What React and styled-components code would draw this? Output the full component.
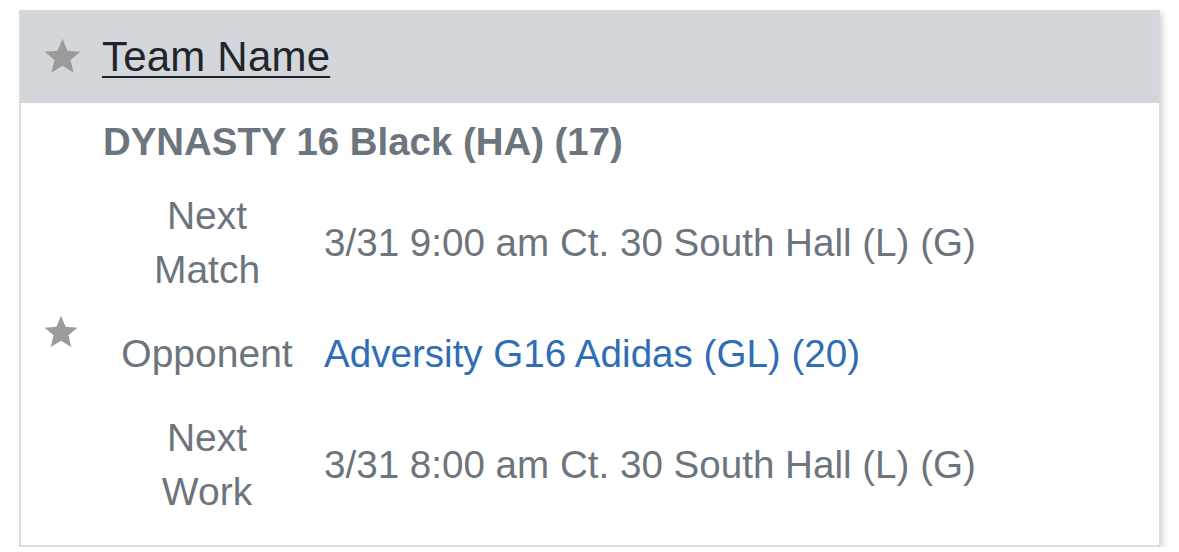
import React from 'react';
import styled, { createGlobalStyle } from 'styled-components';

const Global = createGlobalStyle`
  body {
    margin: 0;
    background: #ffffff;
    font-family: "Liberation Sans", Arial, sans-serif;
  }
`;

const Card = styled.div`
  margin: 10px 0 0 19px;
  width: 1141px;
  height: 537px;
  box-sizing: border-box;
  border: 1px solid #dadada;
  border-left: 2px solid #dcdcdc;
  border-bottom: 2px solid #dcdcdc;
  box-shadow: 3px 3px 6px rgba(0, 0, 0, 0.16);
  background: #fff;
  display: flex;
  flex-direction: column;
`;

const Header = styled.div`
  height: 91px;
  background: #d3d7db;
  border-bottom: 1px solid #cfd4d8;
  display: flex;
  align-items: center;
  gap: 20px;
  padding-left: 22px;
`;

const TeamLink = styled.a`
  font-size: 42px;
  color: #212529;
  text-decoration: underline;
  text-decoration-thickness: 2px;
  text-underline-offset: 5px;
  letter-spacing: 0.2px;
`;

const Body = styled.div`
  display: grid;
  grid-template-columns: 84px 204px 1fr;
  color: #6c757d;
`;

const Heading = styled.div`
  grid-column: 2 / 4;
  font-weight: bold;
  font-size: 38.4px;
  line-height: 54px;
  padding: 12px 0 5px 0;
  margin-left: -2px;
`;

const StarCell = styled.div`
  grid-column: 1;
  padding: 3px 0 0 22px;
  align-self: start;
`;

const Label = styled.div`
  grid-column: 2;
  font-size: 39px;
  line-height: 54px;
  text-align: center;
  padding: 15px 10px;
`;

const Value = styled.div`
  grid-column: 3;
  font-size: 38.6px;
  line-height: 54px;
  padding: 0 15px;
  align-self: center;
  color: ${(p) => (p.link ? '#2f6db6' : '#6c757d')};
`;

const Star = ({ size }) => (
  <svg width={size} height={size * 0.95} viewBox="0 0 24 23" fill="#9b9b9b">
    <path d="M12 0.5l3.1 7.4 8 0.6-6.1 5.2 1.9 7.8L12 17.3l-6.9 4.2 1.9-7.8-6.1-5.2 8-0.6z" />
  </svg>
);

const rows = [
  { label: ['Next', 'Match'], value: '3/31 9:00 am Ct. 30 South Hall (L) (G)' },
  { label: ['Opponent'], value: 'Adversity G16 Adidas (GL) (20)', link: true, star: true },
  { label: ['Next', 'Work'], value: '3/31 8:00 am Ct. 30 South Hall (L) (G)' },
];

export default function App() {
  return (
    <>
      <Global />
      <Card>
        <Header>
          <Star size={39} />
          <TeamLink>Team Name</TeamLink>
        </Header>
        <Body>
          <Heading>DYNASTY 16 Black (HA) (17)</Heading>
          {rows.map((r, i) => (
            <React.Fragment key={i}>
              {r.star && (
                <StarCell style={{ gridRow: i + 2 }}>
                  <Star size={36} />
                </StarCell>
              )}
              <Label style={{ gridRow: i + 2 }}>
                {r.label.map((l, j) => (
                  <div key={j}>{l}</div>
                ))}
              </Label>
              <Value link={r.link} style={{ gridRow: i + 2 }}>
                {r.value}
              </Value>
            </React.Fragment>
          ))}
        </Body>
      </Card>
    </>
  );
}
